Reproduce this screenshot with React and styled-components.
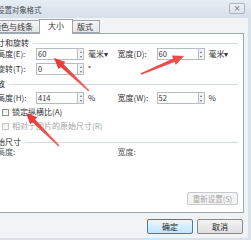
import React from 'react';
import styled, { createGlobalStyle } from 'styled-components';

const GlobalStyle = createGlobalStyle`
  body {
    margin: 0;
    overflow: hidden;
    background: #ffffff;
    font-family: "Noto Sans CJK SC", "Liberation Sans", sans-serif;
  }
`;

const arrows = [
  { tip: [54, 58], tail: [89, 91] },
  { tip: [184, 56], tail: [141, 74] },
  { tip: [26, 113], tail: [59, 146] },
];

// arrow outline from tip to tail, head at the tip, shaft tapering to the tail
const arrowPoints = ({ tip, tail }) => {
  const [tx, ty] = tip;
  const [ex, ey] = tail;
  const len = Math.hypot(ex - tx, ey - ty);
  const ux = (ex - tx) / len;
  const uy = (ey - ty) / len;
  const nx = -uy;
  const ny = ux;
  const bx = tx + ux * 11;
  const by = ty + uy * 11;
  const p = (x, y, w) => `${(x + nx * w).toFixed(1)},${(y + ny * w).toFixed(1)}`;
  return [
    `${tx},${ty}`,
    p(bx, by, 5),
    p(bx, by, 2),
    p(ex, ey, 0.8),
    p(ex, ey, -0.8),
    p(bx, by, -2),
    p(bx, by, -5),
  ].join(' ');
};

const Spin = () => (
  <Spinner>
    <SpinHalf>
      <UpTri />
    </SpinHalf>
    <SpinHalf>
      <DownTri />
    </SpinHalf>
  </Spinner>
);

const Field = ({ label, value, unit }) => (
  <FieldBox>
    <Label>{label}</Label>
    <InputBox>{value}</InputBox>
    <Spin />
    <Unit>{unit}</Unit>
  </FieldBox>
);

const Section = ({ title }) => (
  <SectionHead>
    <span>{title}</span>
    <Rule />
  </SectionHead>
);

const App = () => {
  return (
    <>
      <GlobalStyle />
      <Window>
        <TitleBar>
          <Title>设置对象格式</Title>
          <CloseButton>×</CloseButton>
        </TitleBar>
        <Client>
          <Tabs>
            <Tab>颜色与线条</Tab>
            <Tab active>大小</Tab>
            <Tab>版式</Tab>
          </Tabs>
          <Panel>
            <Section title="尺寸和旋转" />
            <Row>
              <Field label="高度(E):" value="60" unit="毫米▾" />
              <Field label="宽度(D):" value="60" unit="毫米▾" />
            </Row>
            <Row gap={3}>
              <Field label="旋转(T):" value="0" unit="°" />
            </Row>
            <SectionGap>
              <Section title="缩放" />
            </SectionGap>
            <Row gap={3}>
              <Field label="高度(H):" value="414" unit="%" />
              <Field label="宽度(W):" value="52" unit="%" />
            </Row>
            <CheckRow gap={3}>
              <Box />
              锁定纵横比(A)
            </CheckRow>
            <CheckRow gap={4} disabled>
              <Box disabled />
              相对于图片的原始尺寸(R)
            </CheckRow>
            <SectionGap top={6}>
              <Section title="原始尺寸" />
            </SectionGap>
            <OrigRow>
              <OrigLabel>高度:</OrigLabel>
              <OrigLabel>宽度:</OrigLabel>
            </OrigRow>
            <ResetButton>重新设置(S)</ResetButton>
          </Panel>
          <Footer>
            <Button primary>确定</Button>
            <Button>取消</Button>
          </Footer>
        </Client>
      </Window>
      <Marks width="251" height="240" viewBox="0 0 251 240">
        <defs>
          <linearGradient id="red" x1="0" y1="0" x2="1" y2="1">
            <stop offset="0" stopColor="#e5322f" />
            <stop offset="1" stopColor="#ef6a60" />
          </linearGradient>
        </defs>
        {arrows.map((a, i) => (
          <polygon key={i} points={arrowPoints(a)} fill="url(#red)" />
        ))}
      </Marks>
    </>
  );
};

export default App;

const Window = styled.div`
  margin-left: -11px;
  width: 262px;
  height: 240px;
  display: flex;
  flex-direction: column;
  background: #d8e2ec;
`;

const TitleBar = styled.div`
  height: 18px;
  flex-shrink: 0;
  display: flex;
  align-items: center;
  justify-content: space-between;
  padding: 0 6px 0 8px;
  background: linear-gradient(#e6edf4, #d6e0ea);
`;

const Title = styled.span`
  font-size: 7.5px;
  color: #4a4f55;
  letter-spacing: -0.1px;
`;

const CloseButton = styled.div`
  width: 14px;
  height: 9px;
  margin-top: -1px;
  border: 1px solid #a9b4bf;
  border-radius: 2px;
  background: linear-gradient(#eef2f6, #d9e1e9);
  color: #6d7781;
  font-family: "DejaVu Sans", sans-serif;
  font-size: 8px;
  line-height: 9px;
  text-align: center;
`;

const Client = styled.div`
  flex: 1;
  margin: 0 3px 2px 0;
  padding: 2px 4px 0 0;
  background: #f2f3f5;
  display: flex;
  flex-direction: column;
`;

const Tabs = styled.div`
  height: 13px;
  display: flex;
  align-items: flex-end;
  position: relative;
  z-index: 1;
`;

const Tab = styled.div`
  height: ${p => (p.active ? '15px' : '13px')};
  margin-bottom: ${p => (p.active ? '-1px' : '0')};
  padding: ${p => (p.active ? '0 8px' : '0 6px 0 4px')};
  border: 1px solid #a0a6ad;
  border-bottom: ${p => (p.active ? 'none' : '1px solid #a0a6ad')};
  margin-left: -1px;
  background: ${p => (p.active ? '#ffffff' : 'linear-gradient(#f5f5f5, #e6e6e6)')};
  font-size: 8px;
  line-height: 12px;
  color: #333333;
  box-sizing: border-box;
`;

const Panel = styled.div`
  height: 180px;
  box-sizing: border-box;
  border: 1px solid #a0a6ad;
  background: #ffffff;
  display: flex;
  flex-direction: column;
  padding: 4px 5px 0 0;
  font-size: 8px;
  color: #333333;
`;

const SectionHead = styled.div`
  height: 10px;
  margin-left: -1px;
  display: flex;
  align-items: center;
  gap: 4px;
  line-height: 10px;
  color: #2a2a2a;
`;

const Rule = styled.div`
  flex: 1;
  height: 1px;
  background: #d3dbe2;
`;

const SectionGap = styled.div`
  margin-top: ${p => p.top || 4}px;
`;

const Row = styled.div`
  display: flex;
  height: 12px;
  margin-top: ${p => p.gap || 0}px;
  padding-left: 7px;
`;

const FieldBox = styled.div`
  width: 128px;
  display: flex;
  align-items: center;
`;

const Label = styled.span`
  width: 39px;
  line-height: 12px;
  white-space: nowrap;
`;

const InputBox = styled.div`
  width: 41px;
  height: 12px;
  box-sizing: border-box;
  border: 1px solid #b5bcc4;
  border-right: none;
  padding-left: 1px;
  line-height: 10px;
  font-size: 7.5px;
  color: #333333;
`;

const Spinner = styled.div`
  width: 7px;
  height: 12px;
  box-sizing: border-box;
  border: 1px solid #b5bcc4;
  display: flex;
  flex-direction: column;
`;

const SpinHalf = styled.div`
  flex: 1;
  display: flex;
  align-items: center;
  justify-content: center;
  background: #f3f4f6;
`;

const UpTri = styled.div`
  width: 0;
  height: 0;
  border-left: 1.5px solid transparent;
  border-right: 1.5px solid transparent;
  border-bottom: 2px solid #6a6f75;
`;

const DownTri = styled(UpTri)`
  border-bottom: none;
  border-top: 2px solid #6a6f75;
`;

const Unit = styled.span`
  margin-left: 4px;
  line-height: 12px;
  white-space: nowrap;
`;

const CheckRow = styled.div`
  height: 10px;
  margin-top: ${p => p.gap}px;
  padding-left: 12px;
  display: flex;
  align-items: center;
  gap: 3px;
  line-height: 10px;
  color: ${p => (p.disabled ? '#a3a3a3' : '#333333')};
`;

const Box = styled.div`
  width: 7px;
  height: 7px;
  box-sizing: border-box;
  border: 1px solid ${p => (p.disabled ? '#c4c4c4' : '#8e8f8f')};
  background: linear-gradient(#eeeeee, #ffffff);
`;

const OrigRow = styled.div`
  height: 9px;
  padding-left: 7px;
  display: flex;
  line-height: 9px;
`;

const OrigLabel = styled.span`
  width: 128px;
  color: #555555;
`;

const ResetButton = styled.div`
  margin: auto 0 7px auto;
  width: 51px;
  height: 13px;
  box-sizing: border-box;
  border: 1px solid #c6c9cd;
  border-radius: 2px;
  background: #f4f4f4;
  color: #a6a6a6;
  font-size: 7.5px;
  line-height: 11px;
  text-align: center;
`;

const Footer = styled.div`
  flex: 1;
  display: flex;
  justify-content: flex-end;
  align-items: flex-start;
  gap: 4px;
  padding: 6px 1px 0 0;
`;

const Button = styled.div`
  width: 46px;
  height: 15px;
  box-sizing: border-box;
  border: 1px solid ${p => (p.primary ? '#3c7fb1' : '#8a8a8a')};
  border-radius: 2px;
  background: ${p =>
    p.primary
      ? 'linear-gradient(#eaf6fd, #bee6fd)'
      : 'linear-gradient(#f4f4f4, #dedede)'};
  font-size: 8px;
  line-height: 13px;
  text-align: center;
  color: #222222;
`;

const Marks = styled.svg`
  position: absolute;
  left: 0;
  top: 0;
  pointer-events: none;
`;
